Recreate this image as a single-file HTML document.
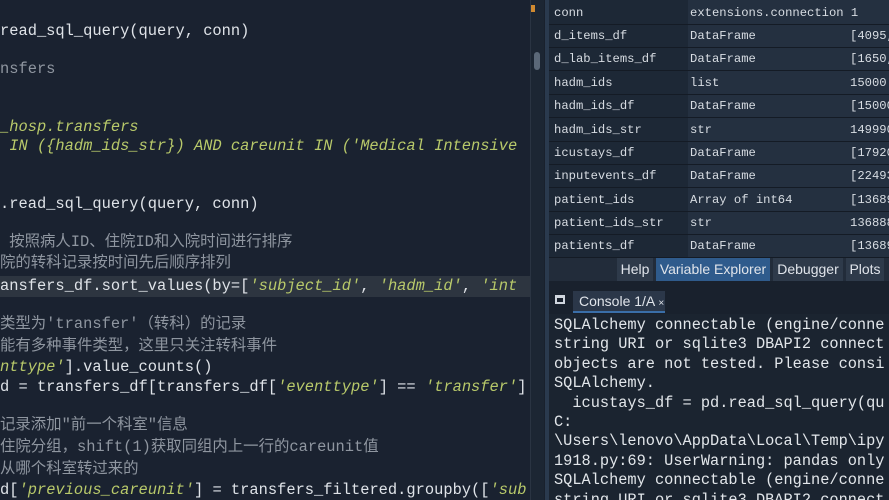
<!DOCTYPE html>
<html><head><meta charset="utf-8"><style>
*{margin:0;padding:0;box-sizing:border-box}
html,body{width:889px;height:500px;overflow:hidden}
body{background:#19212d;position:relative;font-family:"Liberation Mono","Noto Sans CJK SC",monospace}
.ed{position:absolute;left:0;top:0;width:530px;height:500px;background:#1a2230;overflow:hidden}
.l{position:absolute;left:0;white-space:pre;font-size:15.4px;color:#dfe3e8;line-height:20px}
.c{color:#8f96a0}
.s{color:#b8c96a;font-style:italic}
.hl{position:absolute;left:0;top:276px;width:530px;height:21px;background:#2d3540}
.sb{position:absolute;left:530px;top:0;width:14px;height:500px;background:#1c2633;border-left:1px solid #2a3442}
.vs{position:absolute;left:545px;top:0;width:4px;height:500px;background:#2a3a4e}
.rt{position:absolute;left:549px;top:0;width:340px;height:258px;background:#1d2836}
.row{position:absolute;left:0;width:340px;height:23px;border-bottom:1px solid #141b25;font-size:12.2px;color:#d8dde3;line-height:22px}
.row span{position:absolute;top:0}
.tabs{position:absolute;left:549px;top:258px;width:340px;height:23px;background:#222c3a}
.tab{position:absolute;top:0;height:23px;line-height:23px;font-family:"Liberation Sans",sans-serif;font-size:14px;color:#e0e4ea;background:#2e3a4a;text-align:center;white-space:nowrap;overflow:hidden}
.con{position:absolute;left:549px;top:314px;width:340px;height:186px;background:#1b2430;overflow:hidden}
.cl{position:absolute;left:5px;white-space:pre;font-size:15.3px;color:#e2e6ea;line-height:19.4px}
</style></head><body>
<div class="ed">
<div class="hl"></div>
<div class="l" style="top:21px">read_sql_query(query, conn)</div>
<div class="l c" style="top:59px">nsfers</div>
<div class="l s" style="top:117px">_hosp.transfers</div>
<div class="l s" style="top:136px"> IN ({hadm_ids_str}) AND careunit IN ('Medical Intensive</div>
<div class="l" style="top:194px">.read_sql_query(query, conn)</div>
<div class="l c" style="top:232px"> 按照病人ID、住院ID和入院时间进行排序</div>
<div class="l c" style="top:253px">院的转科记录按时间先后顺序排列</div>
<div class="l" style="top:276px">ansfers_df.sort_values(by=[<span class="s">'subject_id'</span>, <span class="s">'hadm_id'</span>, <span class="s">'int</span></div>
<div class="l c" style="top:314px">类型为'transfer'（转科）的记录</div>
<div class="l c" style="top:336px">能有多种事件类型，这里只关注转科事件</div>
<div class="l" style="top:357px"><span class="s">nttype'</span>].value_counts()</div>
<div class="l" style="top:377px">d = transfers_df[transfers_df[<span class="s">'eventtype'</span>] == <span class="s">'transfer'</span>]</div>
<div class="l c" style="top:415px">记录添加"前一个科室"信息</div>
<div class="l c" style="top:437px">住院分组，shift(1)获取同组内上一行的careunit值</div>
<div class="l c" style="top:459px">从哪个科室转过来的</div>
<div class="l" style="top:480px">d[<span class="s">'previous_careunit'</span>] = transfers_filtered.groupby([<span class="s">'sub</span></div>
</div>
<div class="sb"><div style="position:absolute;left:3px;top:52px;width:6px;height:18px;background:#5b6878;border-radius:3px"></div>
<div style="position:absolute;left:0;top:5px;width:4px;height:7px;background:#d08a30"></div></div>
<div class="vs"></div>
<div class="rt">
<div style="position:absolute;left:139px;top:0;width:201px;height:258px;background:#243040"></div>
<div class="row" style="top:2px"><span style="left:5px">conn</span><span style="left:141px">extensions.connection 1</span></div>
<div class="row" style="top:25px"><span style="left:5px">d_items_df</span><span style="left:141px">DataFrame</span><span style="left:301px">[4095,</span></div>
<div class="row" style="top:48px"><span style="left:5px">d_lab_items_df</span><span style="left:141px">DataFrame</span><span style="left:301px">[1650,</span></div>
<div class="row" style="top:72px"><span style="left:5px">hadm_ids</span><span style="left:141px">list</span><span style="left:301px">15000</span></div>
<div class="row" style="top:95px"><span style="left:5px">hadm_ids_df</span><span style="left:141px">DataFrame</span><span style="left:301px">[15000</span></div>
<div class="row" style="top:119px"><span style="left:5px">hadm_ids_str</span><span style="left:141px">str</span><span style="left:301px">149990</span></div>
<div class="row" style="top:142px"><span style="left:5px">icustays_df</span><span style="left:141px">DataFrame</span><span style="left:301px">[17920</span></div>
<div class="row" style="top:165px"><span style="left:5px">inputevents_df</span><span style="left:141px">DataFrame</span><span style="left:301px">[22493</span></div>
<div class="row" style="top:189px"><span style="left:5px">patient_ids</span><span style="left:141px">Array of int64</span><span style="left:301px">[13689</span></div>
<div class="row" style="top:212px"><span style="left:5px">patient_ids_str</span><span style="left:141px">str</span><span style="left:301px">136888</span></div>
<div class="row" style="top:235px"><span style="left:5px">patients_df</span><span style="left:141px">DataFrame</span><span style="left:301px">[13689</span></div>
</div>
<div class="tabs">
<div class="tab" style="left:68px;width:36px">Help</div>
<div class="tab" style="left:107px;width:114px;background:#2f5b8c">Variable Explorer</div>
<div class="tab" style="left:224px;width:70px">Debugger</div>
<div class="tab" style="left:297px;width:38px">Plots</div>
</div>
<div style="position:absolute;left:549px;top:281px;width:340px;height:33px;background:#19212d"></div>
<div style="position:absolute;left:555px;top:295px;width:10px;height:9px;border:2px solid #d0d6de;border-top-width:3px"></div>
<div style="position:absolute;left:573px;top:291px;width:92px;height:22px;background:#2b3749;border-bottom:2px solid #3a6ea8;font-family:'Liberation Sans',sans-serif;font-size:14px;color:#e0e4ea;line-height:21px;padding-left:6px">Console 1/A <span style="font-size:10px">×</span></div>
<div class="con">
<div class="cl" style="top:2px">SQLAlchemy connectable (engine/conne</div>
<div class="cl" style="top:21px">string URI or sqlite3 DBAPI2 connect</div>
<div class="cl" style="top:41px">objects are not tested. Please consi</div>
<div class="cl" style="top:60px">SQLAlchemy.</div>
<div class="cl" style="top:80px">  icustays_df = pd.read_sql_query(qu</div>
<div class="cl" style="top:99px">C:</div>
<div class="cl" style="top:118px">\Users\lenovo\AppData\Local\Temp\ipy</div>
<div class="cl" style="top:138px">1918.py:69: UserWarning: pandas only</div>
<div class="cl" style="top:157px">SQLAlchemy connectable (engine/conne</div>
<div class="cl" style="top:177px">string URI or sqlite3 DBAPI2 connect</div>
</div>
</body></html>
